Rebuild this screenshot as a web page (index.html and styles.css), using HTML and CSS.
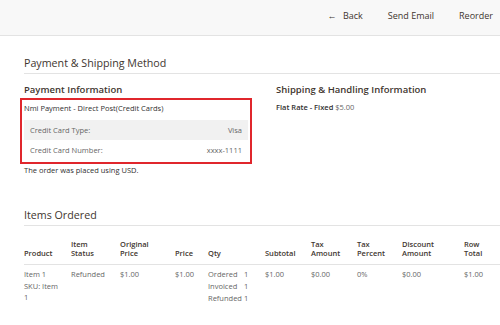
FILE: index.html
```html
<!DOCTYPE html>
<html>

<head>
    <title>Order View</title>
    <link rel="stylesheet" href="styles.css">
</head>

<body>
    <div class="page-actions">
        <button class="action-back"><span class="arrow">&larr;</span> Back</button>
        <button>Send Email</button>
        <button>Reorder</button>
    </div>

    <div class="page-main">
        <section class="page-section">
            <h2 class="section-title">Payment &amp; Shipping Method</h2>
            <div class="section-columns">
                <div class="column">
                    <h3 class="block-title">Payment Information</h3>
                    <div class="payment-method highlight">
                        <div class="method-name">Nmi Payment - Direct Post(Credit Cards)</div>
                        <table class="payment-info">
                            <tr class="odd">
                                <th>Credit Card Type:</th>
                                <td>Visa</td>
                            </tr>
                            <tr>
                                <th>Credit Card Number:</th>
                                <td>xxxx-1111</td>
                            </tr>
                        </table>
                    </div>
                    <div class="order-currency">The order was placed using USD.</div>
                </div>
                <div class="column">
                    <h3 class="block-title">Shipping &amp; Handling Information</h3>
                    <div class="shipping-method"><strong>Flat Rate - Fixed</strong> <span class="price">$5.00</span></div>
                </div>
            </div>
        </section>

        <section class="page-section">
            <h2 class="section-title">Items Ordered</h2>
            <table class="items-table">
                <thead>
                    <tr>
                        <th class="col-product">Product</th>
                        <th class="col-status">Item<br>Status</th>
                        <th class="col-orig">Original<br>Price</th>
                        <th class="col-price">Price</th>
                        <th class="col-qty">Qty</th>
                        <th class="col-subtotal">Subtotal</th>
                        <th class="col-tax">Tax<br>Amount</th>
                        <th class="col-taxp">Tax<br>Percent</th>
                        <th class="col-discount">Discount<br>Amount</th>
                        <th class="col-total">Row<br>Total</th>
                    </tr>
                </thead>
                <tbody>
                    <tr>
                        <td class="col-product">
                            <div>Item 1</div>
                            <div class="sku">SKU: Item<br>1</div>
                        </td>
                        <td class="col-status">Refunded</td>
                        <td class="col-orig">$1.00</td>
                        <td class="col-price">$1.00</td>
                        <td class="col-qty">
                            <table class="qty-table">
                                <tr><th>Ordered</th><td>1</td></tr>
                                <tr><th>Invoiced</th><td>1</td></tr>
                                <tr><th>Refunded</th><td>1</td></tr>
                            </table>
                        </td>
                        <td class="col-subtotal">$1.00</td>
                        <td class="col-tax">$0.00</td>
                        <td class="col-taxp">0%</td>
                        <td class="col-discount">$0.00</td>
                        <td class="col-total">$1.00</td>
                    </tr>
                </tbody>
            </table>
        </section>
    </div>
</body>

</html>
```

FILE: styles.css
```css
body {
    font-family: "Open Sans", Arial, sans-serif;
    font-size: 7.5px;
    color: #303030;
    margin: 0;
    padding: 0;
    overflow: hidden;
}

.page-actions {
    height: 35px;
    background-color: #f8f8f8;
    border-bottom: 1px solid #e3e3e3;
    display: flex;
    justify-content: flex-end;
    align-items: center;
    margin-right: -18px;
}

.page-actions button {
    background: none;
    border: none;
    font-family: inherit;
    font-size: 9px;
    color: #41362f;
    padding: 0;
    margin-right: 25px;
    margin-top: -4px;
}

.page-actions .arrow {
    font-size: 9px;
    margin-right: 4px;
}

.page-main {
    padding: 0 0 0 24px;
}

.page-section {
    margin-bottom: 13px;
}

.section-title {
    font-size: 10.7px;
    font-weight: 400;
    color: #41362f;
    margin: 0;
    padding: 20px 0 3px;
    border-bottom: 1px solid #e3e3e3;
}

.section-columns {
    display: flex;
    gap: 32px;
}

.column {
    width: 220px;
}

.block-title {
    font-size: 9.5px;
    font-weight: 600;
    color: #41362f;
    margin: 9px 0 6px;
}

.highlight {
    outline: 2.5px solid #e0262c;
    outline-offset: 2px;
    margin-right: -4px;
}

.method-name {
    padding: 1px 0 7px;
}

.payment-info {
    width: 100%;
    border-collapse: collapse;
}

.payment-info th,
.payment-info td {
    padding: 5px 6px;
    height: 10px;
    font-weight: 400;
    color: #666;
}

.payment-info th {
    text-align: left;
}

.payment-info td {
    text-align: right;
}

.payment-info tr.odd {
    background-color: #f1f1f1;
}

.order-currency {
    margin-top: 5px;
}

.shipping-method strong {
    font-weight: 600;
}

.shipping-method .price {
    color: #666;
}

.items-table {
    border-collapse: collapse;
    width: 520px;
    table-layout: fixed;
    margin-top: 4px;
}

.items-table > thead > tr > th,
.items-table > tbody > tr > td {
    text-align: left;
    vertical-align: top;
}

.items-table > thead > tr > th {
    font-weight: 600;
    vertical-align: bottom;
    padding: 10px 0 6px;
    line-height: 9px;
    border-bottom: 1px solid #e3e3e3;
    color: #41362f;
}

.items-table > tbody > tr > td {
    padding: 3px 0;
    line-height: 12px;
    color: #666;
}

.items-table .col-product { width: 47px; }
.items-table .col-status { width: 49px; }
.items-table .col-orig { width: 55px; }
.items-table .col-price { width: 33px; }
.items-table .col-qty { width: 57px; }
.items-table .col-subtotal { width: 46px; }
.items-table .col-tax { width: 46px; }
.items-table .col-taxp { width: 45px; }
.items-table .col-discount { width: 62px; }
.items-table .col-total { width: 80px; }

.sku {
    line-height: 11px;
    margin-top: 1px;
}

.qty-table {
    border-collapse: collapse;
}

.qty-table th,
.qty-table td {
    padding: 0;
    font-weight: 400;
    line-height: 12px;
    text-align: left;
}

.qty-table th {
    padding-right: 2px;
}
```
